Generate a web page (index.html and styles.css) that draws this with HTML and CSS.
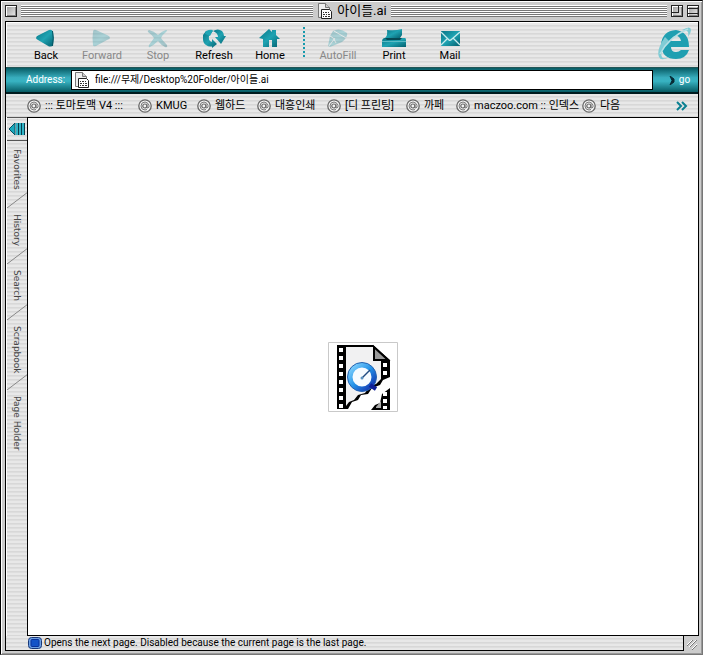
FILE: index.html
```html
<!DOCTYPE html>
<html lang="ko">
<head>
<meta charset="utf-8">
<title>아이들.ai</title>
<link rel="stylesheet" href="styles.css">
</head>
<body>
<svg class="defs" width="0" height="0" aria-hidden="true">
  <defs>
    <linearGradient id="teal" x1="0" y1="0" x2="1" y2="1"><stop offset="0" stop-color="#087586"/><stop offset=".5" stop-color="#1fa3b2"/><stop offset="1" stop-color="#04606f"/></linearGradient>
    <linearGradient id="blue" x1="0" y1="0" x2="1" y2="1"><stop offset="0" stop-color="#8bd8ff"/><stop offset=".5" stop-color="#2492e8"/><stop offset="1" stop-color="#1028a8"/></linearGradient>
    <symbol id="doc" viewBox="0 0 16 16">
      <path d="M1.500 14.500V.5h7l4 4v4" fill="#eee" stroke="#777"/><path d="M1.500 14.500h3" stroke="#777"/><path d="M8.500.5v4h4" fill="#ccc" stroke="#777"/>
      <path d="M4.500 6.500h8l2 2v7h-10z" fill="#fff" stroke="#222"/>
      <path d="M6 9.500h1m1 0h2m1 0h1M6 11.500h2m1 0h1m1 0h2M6 13.500h1m1 0h2m1 0h2" stroke="#333"/>
    </symbol>
    <symbol id="at" viewBox="0 0 14 14">
      <circle cx="7" cy="7" r="6.200" fill="#f4f4f4" stroke="#666" stroke-width="1.300"/>
      <circle cx="6.800" cy="7" r="2" fill="none" stroke="#666" stroke-width="1.200"/>
      <path d="M9 4.500v4q1 1.500 2-.5 .5-4-4-5-4 .2-4 4 .3 4 4 4l2-.5" fill="none" stroke="#777"/>
    </symbol>
  </defs>
</svg>
<div class="window">
  <header class="titlebar">
    <div class="side">
      <button class="box" aria-label="Close"></button>
      <span class="lines"></span>
    </div>
    <h1><svg width="16" height="16"><use href="#doc"/></svg>아이들.ai</h1>
    <div class="side">
      <span class="lines"></span>
      <button class="box zoom" aria-label="Zoom"></button>
      <button class="box shade" aria-label="Collapse"></button>
    </div>
  </header>

  <div class="frame">
    <div class="toolbar striped">
      <button><svg width="24" height="22" viewBox="0 0 24 22"><path d="M2 11Q2 9 5 8L15 3q3-1 4 2 1.500 6 0 13-1 2-4 1.500L4 13q-2-1-2-2z" fill="url(#teal)"/><path d="M18.500 4q1.500 7 0 15" fill="none" stroke="#045563"/></svg>Back</button>
      <button disabled><svg width="24" height="22" viewBox="0 0 24 22"><path d="M20 11q0-2-3-3L6 3q-3-1-3 2-1 6 0 13 0 2 3 1l11-6q3-1 3-2z" fill="url(#teal)"/></svg>Forward</button>
      <button disabled><svg width="24" height="22" viewBox="0 0 24 22"><path d="M3 3q5 1 9 5 4-4 8-5 2-.5 0 2-4 3-5 6 2 3 6 7 1 3-2 2-4-2-7-6-4 4-8 6-2 1-1-2 3-4 5-7-3-4-6-6-1-1 1-2z" fill="url(#teal)"/></svg>Stop</button>
      <button><svg width="24" height="22" viewBox="0 0 24 22"><path d="M11 4q5-3 9 0 2 2 2 5h2l-5 8-6-7h3q0-4-5-6z" fill="url(#teal)"/><path d="M13 18q-5 3-9 0-3-2-3-6V8l3-4h7l-4 5q-1 5 3 6v-3l5 5-5 4v-3z" fill="url(#teal)"/><path d="M4 4q4-2 7-1L8 9 3 7z" fill="#1fa5b5"/></svg>Refresh</button>
      <button><svg width="24" height="22" viewBox="0 0 24 22"><path d="M1 11 11 2l3 3V3h4v5l4 4h-3v8h-5v-7h-3v7H5v-8z" fill="url(#teal)"/></svg>Home</button>
      <span class="divider"></span>
      <button disabled><svg width="24" height="22" viewBox="0 0 24 22"><path d="M7 4q7-4 14 2 1 4-5 9L4 20 2 19 4 9z" fill="url(#teal)"/><path d="m3 19 6-8m-1-7 12 7M4 9q4 1 6 7" stroke="#e4eeee" fill="none"/></svg>AutoFill</button>
      <button><svg width="26" height="22" viewBox="0 0 26 22"><path d="M6 3q8 1 15-1v6l-2 3H4q3-3 2-8z" fill="url(#teal)"/><path d="M3 11h21q1 0 1 2v7H1v-6q0-2 2-3z" fill="url(#teal)"/><path d="M4 11h17l-2 2H6z" fill="#064a55"/><path d="M1 14.500h24" stroke="#5bbac4"/></svg>Print</button>
      <button><svg width="24" height="22" viewBox="0 0 24 22"><path d="M3 4h19v15H3z" fill="url(#teal)"/><path d="m3 5 8 8q1 1 3-1l8-7M3 18l6-6m6-1 7 7" fill="none" stroke="#c9ecef" stroke-width="1.300"/></svg>Mail</button>
      <svg class="logo" width="36" height="36" viewBox="0 0 36 36" role="img" aria-label="Internet Explorer">
        <path d="M32 21H14q0 5 5 5 3 0 5-2h8q-3 9-13 9Q5 33 4 19 5 5 19 4q13 2 13 17zM14 15h10q-1-5-5-5-4 0-5 5z" fill="#209fb1" fill-rule="evenodd"/>
        <path d="M25 4q9-5 9 0 0 3-3 7 1-5-1-6-2 0-5-1zM8 11Q-1 24 2 31q2 5 12-1-8 4-9 1-3-5 7-16z" fill="#80ccd5"/><path d="M3 28Q12 11 31 3" fill="none" stroke="#b7e0e5" stroke-width="1.500"/>
      </svg>
    </div>

    <form class="address">
      <label for="url">Address:</label>
      <span class="field"><svg width="16" height="16"><use href="#doc"/></svg><input id="url" type="text" value="file:///무제/Desktop%20Folder/아이들.ai"></span>
      <button type="button"><svg width="7" height="9" viewBox="0 0 7 9"><path d="m1 0 4 3v3L1 9l2-4.500z" fill="#082b35" stroke="#082b35"/></svg>go</button>
    </form>

    <nav class="favorites striped">
      <a href="#"><svg width="14" height="14"><use href="#at"/></svg>::: 토마토맥 V4 :::</a>
      <a href="#"><svg width="14" height="14"><use href="#at"/></svg>KMUG</a>
      <a href="#"><svg width="14" height="14"><use href="#at"/></svg>웹하드</a>
      <a href="#"><svg width="14" height="14"><use href="#at"/></svg>대흥인쇄</a>
      <a href="#"><svg width="14" height="14"><use href="#at"/></svg>[디 프린팅]</a>
      <a href="#"><svg width="14" height="14"><use href="#at"/></svg>까페</a>
      <a href="#"><svg width="14" height="14"><use href="#at"/></svg>maczoo.com :: 인덱스</a>
      <a href="#"><svg width="14" height="14"><use href="#at"/></svg>다음</a>
      <button aria-label="More favorites"><svg width="12" height="10" viewBox="0 0 12 10"><path d="m1 1 4 4-4 4m5-8 4 4-4 4" fill="none" stroke="#087f91" stroke-width="2"/></svg></button>
    </nav>

    <div class="middle">
      <aside class="sidebar striped">
        <button class="toggle" aria-label="Hide panel"><svg width="18" height="14" viewBox="0 0 18 14"><path d="m1 7 6-6v12z" fill="#19a9bd" stroke="#064f60"/><path d="M9 1v12m3-12v12m3-12v12" stroke="#30b3c6" stroke-width="2"/><path d="M10.500 1v12m3-12v12m3-12v12" stroke="#073c4b"/></svg></button>
        <button class="tab">Favorites<svg width="21" height="16" viewBox="0 0 21 16"><path d="M0 16 21 0" stroke="#888"/></svg></button>
        <button class="tab short">History<svg width="21" height="16" viewBox="0 0 21 16"><path d="M0 16 21 0" stroke="#888"/></svg></button>
        <button class="tab short">Search<svg width="21" height="16" viewBox="0 0 21 16"><path d="M0 16 21 0" stroke="#888"/></svg></button>
        <button class="tab long">Scrapbook<svg width="21" height="16" viewBox="0 0 21 16"><path d="M0 16 21 0" stroke="#888"/></svg></button>
        <button class="tab long">Page Holder</button>
      </aside>
      <main>
        <svg width="70" height="70" viewBox="0 0 70 70" role="img" aria-label="Broken QuickTime media">
          <path d="M.5.5h69v69H.5z" fill="#fff" stroke="#c9c9c9"/>
          <path d="M9 3h36l17 15v17l-7 3-3 5-8 3-4 6-7 1-3 5-6 2-4 7H9z" fill="#000"/>
          <path d="M18 5h27v13h8v19l-5 5-6 2-5 7-7 2-4 5-5 2-3 4z" fill="#f1f1f2"/>
          <path d="M46 5v13h14z" fill="#999" stroke="#000" stroke-width="2"/>
          <path d="M11 6h4v4h-4zm0 8h4v4h-4zm0 8h4v4h-4zm0 8h4v4h-4zm0 8h4v4h-4zm0 8h4v4h-4zm0 8h4v4h-4zm0 8h4v4h-4zM55 21h4v4h-4zm0 8h4v4h-4z" fill="#fff"/>
          <circle cx="34" cy="35" r="12" fill="#f7fbff" stroke="url(#blue)" stroke-width="5"/>
          <circle cx="34" cy="35" r="14.500" fill="none" stroke="#2462b0"/>
          <path d="m42 43 6 4" stroke="#102098" stroke-width="4"/>
          <path d="m34 36 8-8" stroke="#224b80" stroke-width="1.500"/><circle cx="34" cy="36" r="1.500" fill="#5b91bf"/>
          <path d="M62 46v22H43l4-5 5-2 2-9z" fill="#000"/><path d="m48 65 5-6v7h-5z" fill="#aaa"/><path d="M55 50h4v4h-4zm0 7h4v4h-4zm0 7h4v3h-4z" fill="#fff"/>
        </svg>
      </main>
    </div>

    <footer>
      <div class="status striped"><svg width="14" height="12" viewBox="0 0 14 12"><rect x=".5" y=".5" width="13" height="11" rx="3" fill="#6da0e3" stroke="#173779"/><rect x="3" y="2.500" width="8" height="7" rx="1" fill="#1453c7" stroke="#0b3199"/></svg>Opens the next page. Disabled because the current page is the last page.</div>
      <div class="grip"><svg width="12" height="12" viewBox="0 0 12 12"><path d="m1 7 5-5M3 9l7-7M6 11l5-5" stroke="#fff"/><path d="m1 8 6-6M4 9l7-7M6 12l5-5" stroke="#777"/></svg></div>
    </footer>
  </div>
</div>
</body>
</html>
```
FILE: styles.css
```css
* { box-sizing: border-box; }

body {
  margin: 0;
  color: #000;
  font: 11px/14px Roboto, "Noto Sans CJK KR", sans-serif;
}

.defs { position: absolute; }
svg { display: block; flex: none; }

button {
  margin: 0;
  padding: 0;
  border: 0;
  background: none;
  color: inherit;
  font: inherit;
}

.window {
  display: flex;
  flex-direction: column;
  min-height: 100vh;
  padding: 0 3px 3px 4px;
  background: #ccc;
  border: 1px solid #000;
  border-right-color: #777;
  border-bottom-color: #777;
  box-shadow: inset 1px 1px #fff, inset -1px -1px #999;
}

.titlebar {
  display: flex;
  align-items: center;
  gap: 2px;
  height: 20px;
}

.side {
  display: flex;
  flex: 1;
  gap: 4px;
}

.titlebar h1 {
  display: flex;
  align-items: center;
  gap: 4px;
  margin: 0 2px;
  font: 13px/18px Roboto, "Noto Sans CJK KR", sans-serif;
}

.lines {
  flex: 1;
  height: 12px;
  background: repeating-linear-gradient(#fff 0 1px, #777 1px 2px);
}

.box {
  display: grid;
  align-content: start;
  width: 12px;
  height: 12px;
  border: 1px solid #222;
  background: linear-gradient(135deg, #999, #eee);
  box-shadow: inset 1px 1px #fff, inset -1px -1px #888;
}

.zoom::before {
  content: "";
  width: 6px;
  height: 6px;
  border: solid #222;
  border-width: 0 1px 1px 0;
}

.shade { align-content: center; }

.shade::before {
  content: "";
  height: 4px;
  border: solid #222;
  border-width: 1px 0;
}

.frame {
  display: flex;
  flex: 1;
  flex-direction: column;
  border: 1px solid #000;
}

.striped {
  background: repeating-linear-gradient(#e8e8e8 0 2px, #d8d8d8 2px 3px, #dedede 3px 4px);
}

.toolbar {
  display: flex;
  height: 45px;
  padding: 4px 3px 3px 11px;
  border-top: 1px solid #fff;
  border-left: 1px solid #fff;
}

.toolbar button {
  display: flex;
  flex-direction: column;
  align-items: center;
  width: 56px;
}

.toolbar button:disabled { color: #888; }
.toolbar button:disabled svg { opacity: .3; }

.divider {
  width: 2px;
  height: 32px;
  margin: 0 5px;
  background: repeating-linear-gradient(#159aad 0 2px, transparent 2px 4px);
}

.logo { margin: -1px 2px 0 auto; }

.address {
  display: flex;
  align-items: center;
  height: 27px;
  padding-left: 20px;
  border-top: 1px solid #255;
  border-bottom: 2px solid #001c20;
  background: linear-gradient(#075b64, #38adbd 40%, #38b3c2 55%, #075b64);
  color: #fff;
  font-size: 10px;
}

.address label { width: 45px; }

.field {
  display: flex;
  flex: 1;
  align-items: center;
  gap: 5px;
  height: 20px;
  padding-left: 2px;
  border: 1px solid #000;
  background: #fff;
}

.field input {
  flex: 1;
  min-width: 0;
  padding: 0;
  border: 0;
  outline: 0;
  background: none;
  color: #000;
  font: inherit;
}

.address button {
  display: flex;
  align-items: center;
  justify-content: center;
  gap: 3px;
  width: 45px;
  padding-left: 8px;
}

.favorites {
  display: grid;
  grid-template-columns: 111px 59px 60px 70px 79px 50px 126px 50px 1fr;
  align-items: center;
  height: 23px;
  padding: 0 10px 0 21px;
}

.favorites a {
  display: flex;
  gap: 4px;
  color: inherit;
  text-decoration: none;
  white-space: nowrap;
}

.favorites button { justify-self: end; }

.middle {
  display: grid;
  flex: 1;
  grid-template-columns: 21px 1fr;
}

.sidebar {
  display: flex;
  flex-direction: column;
  border-left: 1px solid #fff;
}

.toggle {
  display: grid;
  place-items: center;
  height: 24px;
  border: solid #555;
  border-width: 1px 0;
}

.tab {
  display: flex;
  align-items: center;
  justify-content: space-between;
  height: 67px;
  padding-top: 8px;
  color: #444;
  font: 9px/14px "DejaVu Sans", sans-serif;
  writing-mode: vertical-rl;
}

.short { height: 56px; padding-top: 6px; }
.long { height: 70px; padding-top: 6px; }

main {
  display: grid;
  place-items: center;
  border: solid #000;
  border-width: 1px 0 1px 1px;
  background: #fff;
}

footer {
  display: flex;
  height: 14px;
}

.status {
  display: flex;
  flex: 1;
  align-items: center;
  gap: 2px;
  padding-left: 22px;
  border-right: 1px solid #000;
  font-size: 10px;
}

.grip {
  display: grid;
  place-items: center;
  width: 15px;
  margin: 0 -1px -1px 0;
  background: #ccc;
}
```
